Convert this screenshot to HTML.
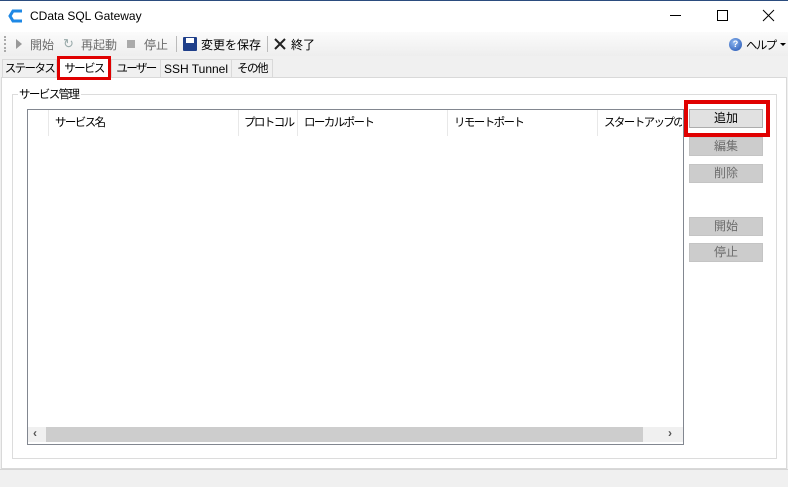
<!DOCTYPE html><html><head><meta charset="utf-8"><style>
*{margin:0;padding:0;box-sizing:border-box}
body{width:788px;height:487px;background:#f0f0f0;font-family:"Liberation Sans","Noto Sans CJK JP",sans-serif;font-size:12px;color:#000;position:relative;overflow:hidden}
.a{position:absolute}
.k{font-size:11.5px;letter-spacing:-1.6px;white-space:nowrap}
.btn{position:absolute;left:689px;width:74px;height:19px;background:#cccccc;border:1px solid #c4c4c4;color:#6d6d6d;text-align:center;line-height:17px;font-size:12px}
.hd{position:absolute;top:114px;font-size:11.5px;letter-spacing:-1.6px;white-space:nowrap}
.sep{position:absolute;top:110px;width:1px;height:26px;background:#e8e8e8}
.tab{position:absolute;top:59px;height:19px;border:1px solid #d9d9d9;border-bottom:none;text-align:center;line-height:18px;background:#f0f0f0}
</style></head><body>
<div class="a" style="left:0;top:0;width:788px;height:32px;background:#fff;border-top:1px solid #2b4c7e"></div>
<svg class="a" style="left:8px;top:9px" width="16" height="14"><path d="M14 2H5L2 7l3 5h9" fill="none" stroke="#1e88e5" stroke-width="3"/></svg>
<div class="a" style="left:30px;top:9px;font-size:12px">CData SQL Gateway</div>
<div class="a" style="left:670px;top:15px;width:11px;height:1px;background:#000"></div>
<div class="a" style="left:717px;top:10px;width:11px;height:11px;border:1px solid #000"></div>
<svg class="a" style="left:762px;top:9px" width="13" height="13"><path d="M1 1L12 12M12 1L1 12" stroke="#000"/></svg>
<div class="a" style="left:0;top:32px;width:788px;height:24px;background:linear-gradient(#fbfbfb,#eeeeee)"></div>
<div class="a" style="left:4px;top:36px;width:2px;height:16px;border-left:2px dotted #aaa"></div>
<svg class="a" style="left:15px;top:38px" width="8" height="12"><path d="M1 1L7 6L1 11z" fill="#999"/></svg>
<div class="a" style="left:30px;top:36px;color:#6d6d6d">開始</div>
<div class="a" style="left:63px;top:36px;color:#9aa;font-size:13px">↻</div>
<div class="a" style="left:81px;top:36px;color:#6d6d6d">再起動</div>
<div class="a" style="left:127px;top:40px;width:8px;height:8px;background:#aaa"></div>
<div class="a" style="left:144px;top:36px;color:#6d6d6d">停止</div>
<div class="a" style="left:176px;top:36px;width:1px;height:16px;background:#bbb"></div>
<div class="a" style="left:183px;top:37px;width:14px;height:14px;background:#1f3f8a;border-radius:1px"><div style="position:absolute;left:3px;top:1px;width:8px;height:5px;background:#fff"></div></div>
<div class="a" style="left:201px;top:36px">変更を保存</div>
<div class="a" style="left:267px;top:36px;width:1px;height:16px;background:#bbb"></div>
<svg class="a" style="left:274px;top:38px" width="12" height="12"><path d="M1 1L11 11M11 1L1 11" stroke="#222" stroke-width="2"/></svg>
<div class="a" style="left:291px;top:36px">終了</div>
<div class="a" style="left:729px;top:38px;width:13px;height:13px;border-radius:50%;background:radial-gradient(circle at 40% 35%,#8fb8f0,#1d4fb0);color:#fff;font-size:9px;text-align:center;line-height:13px;font-weight:bold">?</div>
<div class="a k" style="left:746px;top:37px">ヘルプ</div>
<svg class="a" style="left:780px;top:43px" width="6" height="4"><path d="M0 0H6L3 3z" fill="#000"/></svg>
<div class="tab k" style="left:2px;width:55px">ステータス</div>
<div class="tab k" style="left:111px;width:50px">ユーザー</div>
<div class="tab" style="left:160px;width:72px">SSH Tunnel</div>
<div class="tab k" style="left:231px;width:42px">その他</div>
<div class="a" style="left:1px;top:77px;width:786px;height:392px;background:#fff;border:1px solid #d9d9d9"></div>
<div class="a k" style="left:57px;top:56px;width:54px;height:24px;background:#fff;text-align:center;line-height:21px;border:3px solid #e00000">サービス</div>
<div class="a" style="left:12px;top:94px;width:765px;height:365px;border:1px solid #dcdcdc"></div>
<div class="a k" style="left:18px;top:86px;background:#fff;padding:0 3px 0 1px">サービス管理</div>
<div class="a" style="left:27px;top:109px;width:657px;height:336px;border:1px solid #828790;background:#fff"></div>
<div class="sep" style="left:48px"></div><div class="sep" style="left:238px"></div><div class="sep" style="left:297px"></div><div class="sep" style="left:447px"></div><div class="sep" style="left:597px"></div>
<div class="hd" style="left:55px">サービス名</div>
<div class="hd" style="left:244px">プロトコル</div>
<div class="hd" style="left:304px">ローカルポート</div>
<div class="hd" style="left:454px">リモートポート</div>
<div class="hd" style="left:604px;width:78px;overflow:hidden">スタートアップの種類</div>
<div class="a" style="left:28px;top:427px;width:655px;height:15px;background:#f0f0f0"></div>
<div class="a" style="left:46px;top:427px;width:597px;height:15px;background:#cdcdcd"></div>
<div class="a" style="left:33px;top:426px;color:#555;font-size:12px;font-weight:bold">‹</div>
<div class="a" style="left:668px;top:426px;color:#555;font-size:12px;font-weight:bold">›</div>
<div class="a" style="left:684px;top:100px;width:86px;height:37px;border:4px solid #e00000"></div>
<div class="btn" style="top:109px;background:#e1e1e1;border-color:#adadad;color:#000">追加</div>
<div class="btn" style="top:137px">編集</div>
<div class="btn" style="top:164px">削除</div>
<div class="btn" style="top:217px">開始</div>
<div class="btn" style="top:243px">停止</div>
<div class="a" style="left:0;top:469px;width:788px;height:1px;background:#d5d5d5"></div>
</body></html>
